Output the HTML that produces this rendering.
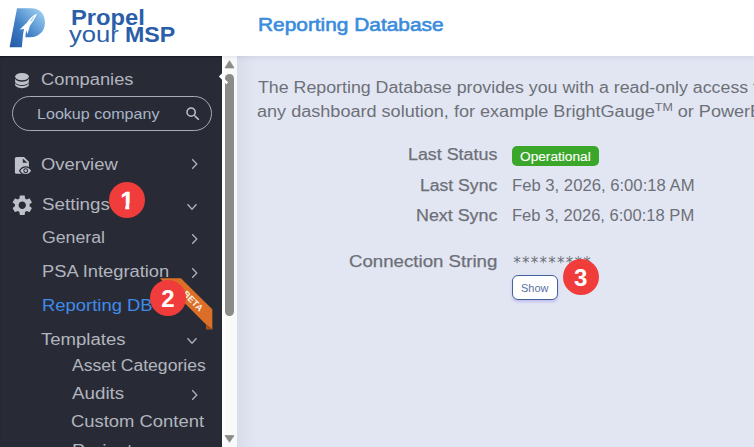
<!DOCTYPE html>
<html lang="en"><head><meta charset="utf-8"><title>Reporting Database</title>
<style>
html,body{margin:0;padding:0}
body{width:754px;height:447px;overflow:hidden;position:relative;background:#e2e6f3;font-family:"Liberation Sans",Arial,sans-serif}
.t{position:absolute;white-space:pre;line-height:1;transform-origin:0 0}
.abs{position:absolute}
#header{left:0;top:0;width:754px;height:56px;background:#fff;box-shadow:0 1px 5px rgba(60,70,110,.13);z-index:5}
#sidebar{left:0;top:56px;width:222px;height:391px;background:#282b36;overflow:hidden;box-shadow:inset 0 2px 2px -1px rgba(0,0,0,.55)}
#sbar{left:222px;top:56px;width:15px;height:391px;background:linear-gradient(90deg,#fff 0,#fff 2px,#f9f9f9 4px,#f9f9f9 100%)}
#thumb{left:224.800px;top:74px;width:9px;height:242px;border-radius:4.500px;background:#8b8b8b}
.circle{position:absolute;width:36px;height:36px;border-radius:50%;background:#f03c3a;color:#fff;font-weight:700;font-size:24px;line-height:37px;text-align:center;z-index:8}
#search{left:12px;top:96px;width:198px;height:33px;border:1px solid #a9acb5;border-radius:18px}
#badge{left:512px;top:145.5px;width:87px;height:20.5px;border-radius:5px;background:#3aa62a}
#show{left:512px;top:275px;width:44px;height:23px;border:1px solid #43619b;border-radius:6px;background:#fff;box-shadow:0 2px 3px rgba(120,100,230,.30)}
#main{left:237px;top:56px;width:517px;height:391px;overflow:hidden;background:linear-gradient(90deg,rgba(100,105,125,.075) 0,rgba(100,105,125,.035) 9px,rgba(100,105,125,0) 20px)}
</style></head><body>

<div class="abs" id="main"></div>
<span class="t" style="left:257.7px;top:80.01px;font-size:16px;transform:scaleX(1.1112);color:#6d7077;">The Reporting Database provides you with a read-only access to</span>
<span class="t" style="left:256.8px;top:103.71px;font-size:16px;transform:scaleX(1.1294);color:#6d7077;">any dashboard solution, for example BrightGauge<span style="font-size:11px;letter-spacing:0;position:relative;top:-6px">TM</span> or PowerBI</span>
<span class="t" style="left:407.8px;top:147.01px;font-size:16px;transform:scaleX(1.1156);color:#6d7077;-webkit-text-stroke:0.25px #6d7077;">Last Status</span>
<span class="t" style="left:420.0px;top:178.01px;font-size:16px;transform:scaleX(1.0987);color:#6d7077;-webkit-text-stroke:0.25px #6d7077;">Last Sync</span>
<span class="t" style="left:415.6px;top:208.01px;font-size:16px;transform:scaleX(1.1163);color:#6d7077;-webkit-text-stroke:0.25px #6d7077;">Next Sync</span>
<span class="t" style="left:349.1px;top:254.01px;font-size:16px;transform:scaleX(1.1660);color:#6d7077;-webkit-text-stroke:0.25px #6d7077;">Connection String</span>
<div class="abs" id="badge"></div>
<span class="t" style="left:520.0px;top:150.87px;font-size:12.5px;transform:scaleX(1.0940);color:#fff;-webkit-text-stroke:0.12px #fff;">Operational</span>
<span class="t" style="left:512.0px;top:178.01px;font-size:16px;transform:scaleX(1.0415);color:#6d7077;">Feb 3, 2026, 6:00:18 AM</span>
<span class="t" style="left:512.0px;top:208.01px;font-size:16px;transform:scaleX(1.0345);color:#6d7077;">Feb 3, 2026, 6:00:18 PM</span>
<span class="t" style="left:513.2px;top:255.9px;font-size:15px;letter-spacing:1.25px;color:#6d7077;font-family:'DejaVu Sans',sans-serif">*********</span>
<div class="abs" id="show"></div>
<span class="t" style="left:521.2px;top:282.64px;font-size:11px;transform:scaleX(0.9989);color:#5a6fa3;">Show</span>
<div class="circle" style="left:562.6px;top:258.6px">3</div>
<div class="abs" id="header"></div>
<svg class="abs" style="left:0;top:0;z-index:6" width="60" height="56" viewBox="0 0 60 56">
<defs><linearGradient id="lg" x1="10" y1="47" x2="44" y2="12" gradientUnits="userSpaceOnUse"><stop offset="0" stop-color="#2458a6"/><stop offset="0.45" stop-color="#3f7fc6"/><stop offset="1" stop-color="#9dd0f2"/></linearGradient></defs>
<path d="M17 8.2 H31 C40 8.2 45 14 45 22.5 C45 31 39 37.3 30 37.3 H25.400 L22.700 38.800 C22.300 41.500 22.100 44.500 21.900 47.300 H9.600 Z" fill="url(#lg)"/>
<path d="M37 13.700 C35.800 16.500 34.600 18.800 33 21.200 L30 25.600 L27.400 34.200 L26.300 30.300 C25.800 32.500 25.500 35 25.400 37.500 L22.600 39 C22.800 35.500 23.300 32 24 28.900 L19.700 29.400 L26.800 22.700 C29.500 18.500 33 15 37 13.700 Z" fill="#fff"/>
<path d="M33.800 16.800 L30.600 21.400" stroke="#a9cdee" stroke-width="1.100" fill="none"/>
</svg>
<span class="t" style="left:70.9px;top:6.93px;font-size:22px;transform:scaleX(1.0793);color:#2b5ea9;font-weight:700;z-index:6;">Propel</span>
<span class="t" style="left:69.0px;top:24.10px;font-size:21.8px;transform:scaleX(1.1744);color:#2b5ea9;z-index:6;">your</span>
<span class="t" style="left:125.3px;top:24.10px;font-size:21.8px;transform:scaleX(1.0649);color:#2b5ea9;font-weight:700;z-index:6;">MSP</span>
<span class="t" style="left:257.7px;top:16.14px;font-size:18.2px;transform:scaleX(1.1472);color:#3a8cdc;z-index:6;-webkit-text-stroke:0.6px #3a8cdc;">Reporting Database</span>
<div class="abs" id="sidebar"></div>
<span class="t" style="left:41.4px;top:72.01px;font-size:16px;transform:scaleX(1.1429);color:#b3b5be;">Companies</span>
<div class="abs" id="search"></div>
<span class="t" style="left:37.0px;top:106.52px;font-size:14.8px;transform:scaleX(1.0869);color:#a9b5c7;">Lookup company</span>
<span class="t" style="left:41.4px;top:157.01px;font-size:16px;transform:scaleX(1.1501);color:#b3b5be;">Overview</span>
<span class="t" style="left:41.8px;top:197.01px;font-size:16px;transform:scaleX(1.1728);color:#b3b5be;">Settings</span>
<span class="t" style="left:41.6px;top:230.01px;font-size:16px;transform:scaleX(1.1068);color:#b3b5be;">General</span>
<span class="t" style="left:42.0px;top:264.01px;font-size:16px;transform:scaleX(1.1440);color:#b3b5be;">PSA Integration</span>
<span class="t" style="left:42.0px;top:298.01px;font-size:16px;transform:scaleX(1.1515);color:#3f8bea;">Reporting DB</span>
<span class="t" style="left:41.4px;top:332.01px;font-size:16px;transform:scaleX(1.1588);color:#b3b5be;">Templates</span>
<span class="t" style="left:72.0px;top:358.01px;font-size:16px;transform:scaleX(1.0973);color:#b3b5be;">Asset Categories</span>
<span class="t" style="left:72.0px;top:386.01px;font-size:16px;transform:scaleX(1.1739);color:#b3b5be;">Audits</span>
<span class="t" style="left:71.0px;top:414.01px;font-size:16px;transform:scaleX(1.1504);color:#b3b5be;">Custom Content</span>
<span class="t" style="left:72.0px;top:443.01px;font-size:16px;transform:scaleX(1.2111);color:#b3b5be;">Projects</span>
<svg class="abs" style="left:14px;top:72px" width="16" height="17" viewBox="0 0 16 17">
<ellipse cx="8" cy="4.6" rx="6.9" ry="3.7" fill="#bfc1ca"/>
<path d="M1.1 6.8 C2 8.9 4.8 9.8 8 9.8 S14 8.9 14.9 6.8 V9.6 C14.9 11.6 11.8 13.1 8 13.1 S1.1 11.6 1.1 9.6 Z" fill="#bfc1ca"/>
<path d="M1.1 10.9 C2 13 4.8 13.9 8 13.9 S14 13 14.9 10.9 V12.6 C14.9 14.7 11.8 16.2 8 16.2 S1.1 14.7 1.1 12.6 Z" fill="#bfc1ca"/>
</svg>
<svg class="abs" style="left:183.9px;top:104.9px" width="18" height="18" viewBox="0 0 24 24"><path fill="#bfc1ca" d="M15.5 14h-.79l-.28-.27A6.471 6.471 0 0 0 16 9.500 6.500 6.500 0 1 0 9.500 16c1.610 0 3.090-.59 4.230-1.570l.27.28v.79l5 4.990L20.490 19l-4.990-5zm-6 0C7.010 14 5 11.990 5 9.500S7.010 5 9.500 5 14 7.010 14 9.500 11.990 14 9.500 14z"/></svg>
<svg class="abs" style="left:14px;top:156px" width="20" height="20" viewBox="0 0 20 20">
<path d="M2.500 0.900 H10 L14.900 5.700 V17.800 H2.500 Q0.900 17.800 0.900 16.300 V2.400 Q0.900 0.900 2.500 0.900 Z" fill="#bfc1ca"/>
<path d="M8.800 2.600 V6.800 H13.300 Z" fill="#282b36"/>
<path d="M5.600 14.700 C7 12.100 9.200 10.800 11.700 10.800 S16.400 12.100 17.800 14.700 C16.400 17.300 14.200 18.600 11.700 18.600 S7 17.300 5.600 14.700 Z" fill="#bfc1ca" stroke="#282b36" stroke-width="1.300"/>
<circle cx="11.700" cy="14.700" r="1.900" fill="none" stroke="#282b36" stroke-width="1.100"/>
</svg>
<svg class="abs" style="left:9.700px;top:193.100px" width="24.500" height="24.500" viewBox="0 0 24 24"><path fill="#bfc1ca" d="M19.140,12.940c0.040-0.300,0.060-0.610,0.060-0.940c0-0.320-0.020-0.640-0.070-0.940l2.030-1.580c0.180-0.140,0.230-0.410,0.120-0.610l-1.920-3.320c-0.120-0.220-0.370-0.290-0.590-0.220l-2.390,0.960c-0.500-0.380-1.030-0.700-1.620-0.940L14.400,2.810c-0.040-0.240-0.240-0.410-0.480-0.410h-3.840c-0.240,0-0.430,0.170-0.470,0.410L9.250,5.350C8.660,5.590,8.120,5.920,7.630,6.290L5.240,5.330c-0.220-0.080-0.470,0-0.590,0.220L2.740,8.870C2.620,9.080,2.660,9.340,2.860,9.480l2.030,1.580C4.840,11.360,4.800,11.690,4.800,12s0.020,0.640,0.070,0.940l-2.030,1.580c-0.180,0.140-0.230,0.410-0.120,0.610l1.920,3.320c0.120,0.220,0.370,0.290,0.590,0.220l2.390-0.960c0.500,0.380,1.030,0.700,1.620,0.940l0.360,2.540c0.050,0.240,0.240,0.410,0.480,0.410h3.840c0.240,0,0.440-0.170,0.470-0.410l0.360-2.540c0.590-0.240,1.130-0.560,1.620-0.940l2.390,0.960c0.220,0.080,0.470,0,0.590-0.220l1.920-3.320c0.120-0.220,0.070-0.470-0.120-0.610L19.140,12.940z M12,15.600c-1.980,0-3.600-1.620-3.600-3.600s1.620-3.600,3.600-3.600s3.600,1.620,3.600,3.600S13.980,15.600,12,15.600z"/></svg>
<svg class="abs" style="left:190px;top:157.0px" width="10" height="14" viewBox="0 0 10 14"><path d="M2.200 2.300 L6.800 7 L2.200 11.700" fill="none" stroke="#b0b2ba" stroke-width="1.300"/></svg>
<svg class="abs" style="left:185.400px;top:202.0px" width="14" height="10" viewBox="0 0 14 10"><path d="M2.500 2.300 L7 7.200 L11.500 2.300" fill="none" stroke="#b0b2ba" stroke-width="1.300"/></svg>
<svg class="abs" style="left:190px;top:231.9px" width="10" height="14" viewBox="0 0 10 14"><path d="M2.200 2.300 L6.800 7 L2.200 11.700" fill="none" stroke="#b0b2ba" stroke-width="1.300"/></svg>
<svg class="abs" style="left:190px;top:265.8px" width="10" height="14" viewBox="0 0 10 14"><path d="M2.200 2.300 L6.800 7 L2.200 11.700" fill="none" stroke="#b0b2ba" stroke-width="1.300"/></svg>
<svg class="abs" style="left:185.400px;top:336.3px" width="14" height="10" viewBox="0 0 14 10"><path d="M2.500 2.300 L7 7.200 L11.500 2.300" fill="none" stroke="#b0b2ba" stroke-width="1.300"/></svg>
<svg class="abs" style="left:190px;top:387.9px" width="10" height="14" viewBox="0 0 10 14"><path d="M2.200 2.300 L6.800 7 L2.200 11.700" fill="none" stroke="#b0b2ba" stroke-width="1.300"/></svg>
<svg class="abs" style="left:155px;top:274px;z-index:7" width="62" height="60" viewBox="155 274 62 60">
<path d="M159.900 278.300 H180.900 L212.300 309.300 V329.400 L206 324.600 Z" fill="#dc6f27"/>
<path d="M206 324.600 L212.300 329.400 H206 Z" fill="#a5501b"/>
<text x="0" y="0" transform="translate(190.900 303.200) rotate(45)" font-family="Liberation Sans, Arial, sans-serif" font-weight="700" font-size="9" fill="#fdf3ea" text-anchor="middle" letter-spacing="0.200">BETA</text>
</svg>
<div class="circle" style="left:108.750px;top:182px"><span style="display:inline-block;position:relative;left:0.400px;top:-0.500px;-webkit-text-stroke:0.350px #fff;height:36px;clip-path:polygon(0 0,100% 0,100% 61%,66% 61%,66% 100%,36% 100%,36% 61%,0 61%)">1</span></div>
<div class="circle" style="left:150px;top:280px">2</div>
<div class="abs" id="sbar"></div><div class="abs" id="thumb"></div>
<svg class="abs" style="left:222px;top:56px" width="15" height="391" viewBox="222 56 15 391">
<path d="M229.500 60.700 L234 67.900 H225 Z" fill="#8b8b8b" stroke="#8b8b8b" stroke-width="0.800" stroke-linejoin="round"/>
<path d="M229.500 442.200 L234 435.600 H225 Z" fill="#8b8b8b" stroke="#8b8b8b" stroke-width="0.800" stroke-linejoin="round"/>
</svg>
<svg class="abs" style="left:215px;top:64px;z-index:9" width="16" height="26" viewBox="215 64 16 26"><path d="M228 70.800 L226.200 69 L218.900 76.500 L226.400 84.200 L228.200 82.400 L222.400 76.500 Z" fill="#fff"/></svg>
</body></html>
